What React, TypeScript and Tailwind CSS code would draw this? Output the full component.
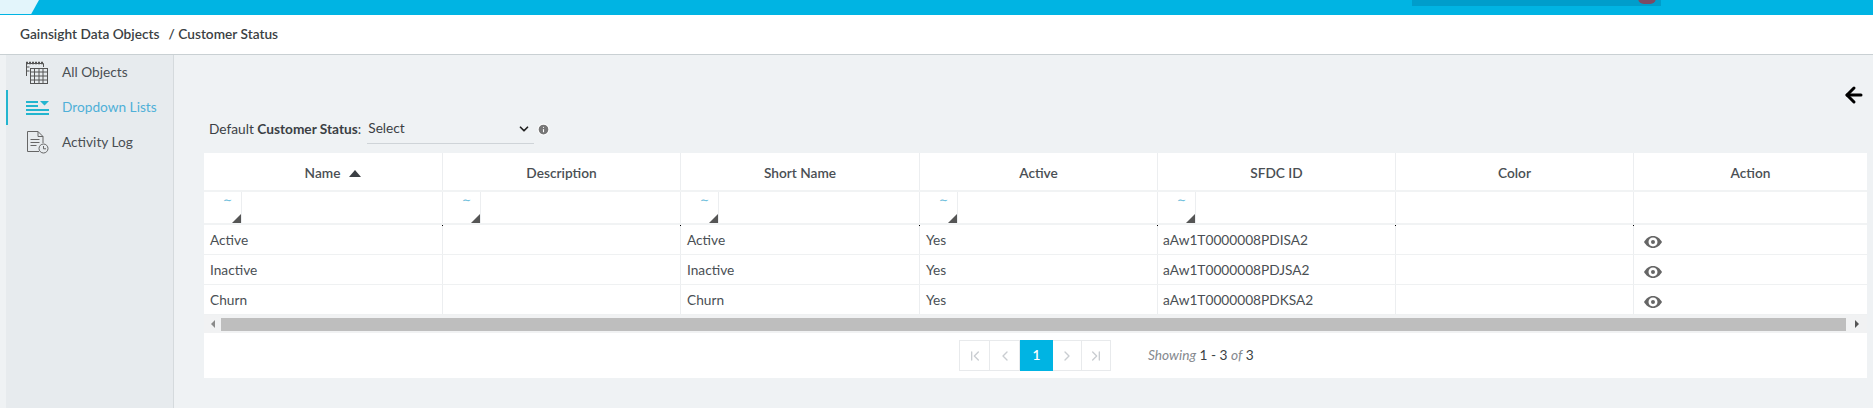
import React from 'react';
import { ArrowLeft, ChevronDown, ChevronFirst, ChevronLast, ChevronLeft, ChevronRight, Info } from 'lucide-react';

const font = { fontFamily: 'Lato, "Open Sans", sans-serif' };

const columns = ['Name', 'Description', 'Short Name', 'Active', 'SFDC ID', 'Color', 'Action'];

const rows = [
  { name: 'Active', id: 'aAw1T0000008PDISA2' },
  { name: 'Inactive', id: 'aAw1T0000008PDJSA2' },
  { name: 'Churn', id: 'aAw1T0000008PDKSA2' },
];

const gridCols = 'grid grid-cols-[239px_238px_239px_238px_238px_238px_233px]';

const Eye = () => (
  <svg width="18" height="12" viewBox="0 0 18 12" className="text-[#666]">
    <path fill="currentColor" fillRule="evenodd" d="M9 0c4 0 7 2.600 9 6-2 3.400-5 6-9 6S2 9.400 0 6c2-3.400 5-6 9-6zm0 1.600C6.500 1.600 4.500 3.500 4.500 6s2 4.400 4.500 4.400 4.500-1.900 4.500-4.400S11.500 1.600 9 1.600zM9 4a2 2 0 1 1 0 4 2 2 0 0 1 0-4z" />
  </svg>
);

const ObjectsIcon = () => (
  <svg width="24" height="24" viewBox="0 0 24 24" fill="none" stroke="#555" strokeWidth="1">
    <path d="M1.500 15V2.500h17V6" />
    <path d="M1 2h18" strokeWidth="2.500" strokeDasharray="2 1" />
    <rect x="5.500" y="7.500" width="17" height="15" />
    <path d="M5.500 11h17M5.500 15h17M5.500 19h17M9.500 7.500v15M14 7.500v15M18 7.500v15" />
    <path d="M1.500 6h3M1.500 10h3" />
  </svg>
);

const ListIcon = () => (
  <svg width="23" height="14" viewBox="0 0 23 14" fill="#23b5cf">
    <path d="M0 0h12v2H0zM0 4h12v2H0zM0 8h23v2H0zM0 12h23v2H0zM14 0h9l-4.500 4.500z" />
  </svg>
);

const LogIcon = () => (
  <svg width="23" height="23" viewBox="0 0 23 23" fill="none" stroke="#666" strokeWidth="1">
    <path d="M13 20.500H1.500v-20H12l5 5V12" />
    <path d="M12 .5v5h5M4.500 8.500h9M4.500 11.500h9M4.500 14.500h6" />
    <circle cx="17.500" cy="17.500" r="4.500" />
    <path d="M17.500 15v2.800h2.500" />
  </svg>
);

const SideItem = ({ icon, label, active }: { icon: React.ReactNode; label: string; active?: boolean }) => (
  <div className={`flex h-[35px] items-center border-l-2 ${active ? 'border-[#23b5cf] text-[#4fb0d8]' : 'border-transparent text-[#4a4f54]'}`}>
    <div className="ml-[17px] flex w-[24px] justify-center">{icon}</div>
    <span className="ml-[13px] text-[13.7px]">{label}</span>
  </div>
);

const PageButton = ({ children, className = '' }: { children: React.ReactNode; className?: string }) => (
  <div className={`flex h-[31px] items-center justify-center border border-[#e8eaec] text-[#c9cdd1] ${className}`}>{children}</div>
);

export default function App() {
  return (
    <div className="flex h-[408px] w-[1873px] flex-col overflow-hidden bg-[#eff2f4]" style={font}>
      {/* TOP BAR */}
      <div className="relative h-[15px] shrink-0 bg-[#00b4e3]">
        <div className="absolute left-0 top-0 h-[14px] w-[39px] bg-[#e3f5fb] [clip-path:polygon(0_0,100%_0,80%_100%,0_100%)]" />
        <div className="absolute left-[1412px] top-0 h-[6px] w-[249px] bg-[#009dcb]" />
        <div className="absolute left-[1638px] top-[-8px] h-[12px] w-[18px] rounded-full bg-[#7d4a63]" />
      </div>

      {/* BREADCRUMB */}
      <div className="flex h-[40px] shrink-0 items-center border-b border-[#c9d0d3] bg-white pl-[20px] text-[13.7px] font-semibold text-[#3b3f44]">
        <span>Gainsight Data Objects</span>
        <span className="ml-[9px]">/ Customer Status</span>
      </div>

      <div className="flex min-h-0 flex-1">
        {/* SIDEBAR */}
        <aside className="ml-[6px] w-[168px] shrink-0 border-r border-[#d5dadd] bg-[#e7ebee]">
          <SideItem icon={<ObjectsIcon />} label="All Objects" />
          <SideItem icon={<ListIcon />} label="Dropdown Lists" active />
          <SideItem icon={<LogIcon />} label="Activity Log" />
        </aside>

        {/* CONTENT */}
        <main className="min-w-0 flex-1 pl-[30px] pr-[6px]">
          <div className="flex h-[49px] items-end justify-end">
            <ArrowLeft className="mb-[-3px] mr-[1px] h-[24px] w-[24px] text-black" strokeWidth={3} />
          </div>
          <div className="mt-[10px] flex h-[30px] items-center pl-[5px] text-[13.7px] text-[#3b3f44]">
            <span>Default&nbsp;</span>
            <span className="font-bold">Customer Status</span>
            <span>:</span>
            <div className="ml-[6px] flex h-[30px] w-[167px] items-center justify-between border-b border-[#cfd4d8] pl-[1px] pr-[3px]">
              <span>Select</span>
              <ChevronDown className="h-[14px] w-[14px] text-[#222]" strokeWidth={3} />
            </div>
            <Info className="ml-[3px] h-[13px] w-[13px] fill-[#777] text-white" />
          </div>

          {/* TABLE */}
          <div className="mt-[9px] bg-white text-[13.7px] text-[#4a4f54]">
            <div className={`${gridCols} h-[39px] border-b-2 border-[#f1f3f4]`}>
              {columns.map((c) => (
                <div key={c} className="flex items-center justify-center border-r border-[#eceef0] pt-[3px] font-semibold last:border-r-0">
                  {c === 'Name' && <span className="w-[20px]" />}
                  {c}
                  {c === 'Name' && <span className="ml-[9px] h-0 w-0 border-x-[6px] border-b-[7px] border-x-transparent border-b-[#3b3f44]" />}
                </div>
              ))}
            </div>
            <div className={`${gridCols} h-[33px] border-b-2 border-[#f1f3f4]`}>
              {columns.map((c, i) => (
                <div key={c} className="relative flex border-r border-[#eceef0] last:border-r-0">
                  {i < 5 && (
                    <div className="relative w-[38px] border-r border-[#eceef0] pl-[19px] pt-[1px] text-[11px] text-[#5cb8d8]" style={{ fontFamily: '"DejaVu Sans", sans-serif' }}>
                      ∼
                      <span className="absolute bottom-0 right-0 h-0 w-0 border-b-[9px] border-l-[9px] border-b-[#555] border-l-transparent" />
                    </div>
                  )}
                  {i < 6 && <span className="absolute -bottom-[3px] -right-px h-px w-px bg-black" />}
                </div>
              ))}
            </div>
            {rows.map((r) => (
              <div key={r.name} className={`${gridCols} h-[30px] border-b border-[#eff1f2] last:border-b-0`}>
                <div className="flex items-center border-r border-[#eceef0] pl-[6px] pt-[1px]">{r.name}</div>
                <div className="border-r border-[#eceef0]" />
                <div className="flex items-center border-r border-[#eceef0] pl-[6px] pt-[1px]">{r.name}</div>
                <div className="flex items-center border-r border-[#eceef0] pl-[6px] pt-[1px]">Yes</div>
                <div className="flex items-center border-r border-[#eceef0] pl-[5px] pt-[1px]">{r.id}</div>
                <div className="border-r border-[#eceef0]" />
                <div className="flex items-center pl-[10px] pt-[5px]"><Eye /></div>
              </div>
            ))}

            {/* SCROLLBAR */}
            <div className="flex h-[18px] items-center bg-[#f1f2f3] py-[3px]">
              <div className="flex w-[17px] justify-center">
                <span className="h-0 w-0 border-y-[4px] border-r-[4px] border-y-transparent border-r-[#8a8a8a]" />
              </div>
              <div className="h-[13px] flex-1 bg-[#bebebe]" />
              <div className="flex w-[21px] justify-center">
                <span className="h-0 w-0 border-y-[4px] border-l-[4px] border-y-transparent border-l-[#555]" />
              </div>
            </div>

            {/* PAGER */}
            <div className="flex h-[45px] items-center pl-[755px]">
              <PageButton className="w-[31px]"><ChevronFirst className="h-[16px] w-[16px]" /></PageButton>
              <PageButton className="w-[30px] border-l-0"><ChevronLeft className="h-[16px] w-[16px]" /></PageButton>
              <div className="flex h-[31px] w-[33px] items-center justify-center bg-[#00b4e3] font-semibold text-white">1</div>
              <PageButton className="w-[29px] border-l-0"><ChevronRight className="h-[16px] w-[16px]" /></PageButton>
              <PageButton className="w-[29px] border-l-0"><ChevronLast className="h-[16px] w-[16px]" /></PageButton>
              <span className="ml-[37px] text-[#3b3f44]">
                <em className="text-[#85898e]">Showing</em> 1 - 3 <em className="text-[#85898e]">of</em> 3
              </span>
            </div>
          </div>
        </main>
      </div>
    </div>
  );
}
